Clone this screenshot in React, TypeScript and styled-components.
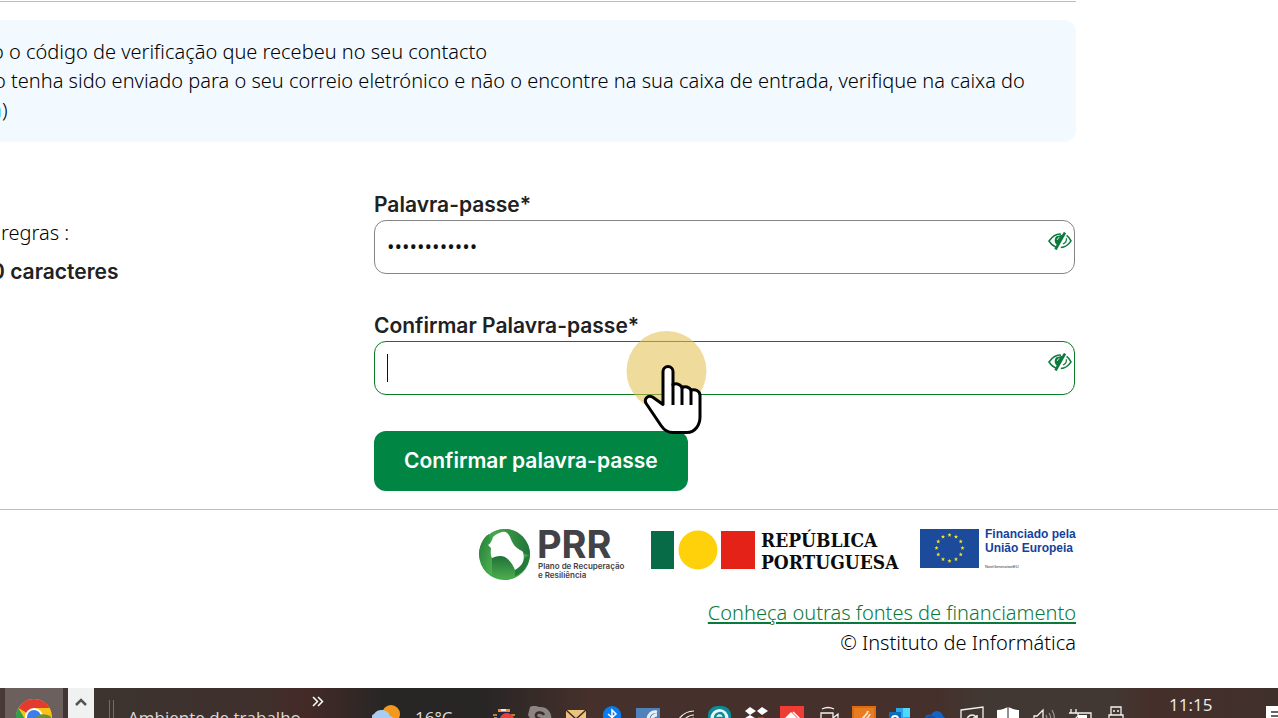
import React from 'react';
import styled, { createGlobalStyle } from 'styled-components';

const GlobalStyle = createGlobalStyle`
  *, *::before, *::after { box-sizing: border-box; }
  body { margin: 0; background: #fff; color: #000; font: 300 20px/29px "Noto Sans", "Open Sans", sans-serif; }
  p, h2 { margin: 0; }
`;

const Page = styled.div`
  height: 100vh;
  overflow: hidden;
`;
const Main = styled.main`
  padding-right: 202px;
  border-top: 1px solid #fff;
`;
const TopRule = styled.hr`
  height: 1px;
  margin: 0 0 18px;
  border: 0;
  background: #bdbdbd;
`;
const Notice = styled.section`
  padding: 17px 20px 18px 0;
  background: #f2f9ff;
  border-radius: 0 12px 12px 0;
  white-space: nowrap;
`;
const NoticeLine = styled.p<{ $shift: number }>`
  margin-left: -${p => p.$shift}px;
  a { color: #2a9fe0; text-decoration: none; }
`;
const Columns = styled.div`
  display: grid;
  grid-template-columns: 374px 1fr;
  padding: 47px 1px 18px 0;
`;
const Rules = styled.div`
  padding-top: 29px;
  p { padding-left: 1px; }
`;
const RuleHeading = styled.h2`
  margin: 10px 0 0 -9px;
  font: 600 21px/29px Inter, sans-serif;
  color: #212121;
`;
const Form = styled.form`
  display: flex;
  flex-direction: column;
  align-items: flex-start;
  gap: 36px;
`;
const Field = styled.div`
  width: 100%;
`;
const Label = styled.label`
  display: block;
  font: 600 21px/31px Inter, sans-serif;
  color: #212121;
`;
const InputWrap = styled.div<{ $active?: boolean }>`
  position: relative;
  display: flex;
  height: 54px;
  border: 1px solid ${p => (p.$active ? '#0b7a2b' : '#858585')};
  border-radius: 12px;
`;
const Input = styled.input`
  flex: 1;
  min-width: 0;
  padding: 0 12px 2px;
  border: 0;
  outline: 0;
  background: transparent;
  color: #111;
  font: 400 20px/29px "Open Sans", sans-serif;
`;
const Caret = styled.span`
  position: absolute;
  left: 12px;
  top: 12px;
  width: 1px;
  height: 28px;
  background: #111;
`;
const EyeButton = styled.button`
  align-self: flex-start;
  padding: 11px 2px 0 0;
  border: 0;
  background: none;
  svg { display: block; }
`;
const Pointer = styled.svg`
  position: absolute;
  left: 250px;
  top: -13px;
  z-index: 2;
`;
const Submit = styled.button`
  height: 60px;
  padding: 0 30px 2px;
  border: 0;
  border-radius: 12px;
  background: #008542;
  color: #fff;
  font: 600 21px/29px Inter, sans-serif;
  white-space: nowrap;
`;
const Footer = styled.footer`
  padding: 19px 202px 30px 0;
  border-top: 1px solid #bdbdbd;
  text-align: right;
  line-height: 30px;
`;
const Logos = styled.div`
  display: flex;
  justify-content: flex-end;
  gap: 20px;
  padding-bottom: 17px;
  svg { display: block; overflow: visible; }
`;
const FundingLink = styled.a`
  color: #0a7a3c;
  text-decoration: underline;
  text-underline-offset: 2px;
`;
const Taskbar = styled.div`
  display: flex;
  align-items: center;
  height: 60px;
  padding-left: 5px;
  background: linear-gradient(90deg, #4a3936 0, #3c342f 8%, #3f302c 20%, #432a27 24%, #282625 30%, #282625 38%, #45302b 46%, #45302b 73%, #423833 77%, #423833 87%, #462f2a 90%, #40302c 100%);
  color: #eee;
  white-space: nowrap;
  svg { display: block; flex: none; }
`;
const AppButton = styled.button`
  display: grid;
  place-items: center;
  width: 58px;
  height: 60px;
  padding: 0 0 2px;
  border: 0;
  background: #6b605d;
`;
const ScrollButton = styled.button`
  width: 26px;
  height: 60px;
  margin: 0 15px 0 5px;
  padding: 9px 0 0 7px;
  border: 0;
  background: #f0f1f1;
  display: flex;
  align-items: flex-start;
`;
const Grip = styled.span`
  width: 5px;
  height: 36px;
  margin-right: 14px;
  border: solid #756c68;
  border-width: 0 1px;
`;
const TaskText = styled.span`
  font: 400 17px/24px "Open Sans", sans-serif;
  color: #dcdad9;
`;
const Overflow = styled.button`
  align-self: flex-start;
  margin-left: 11px;
  padding: 8px 0 0;
  border: 0;
  background: none;
`;
const Spacer = styled.div`
  flex: 1;
`;
const Weather = styled.div`
  display: flex;
  align-items: center;
  gap: 15px;
  width: 120px;
`;
const Tray = styled.div`
  display: flex;
  gap: 12px;
`;
const Clock = styled.time`
  align-self: flex-start;
  width: 96px;
  padding: 3px 0 0 41px;
  font: 400 17px/27px "Open Sans", sans-serif;
  color: #eee;
  box-sizing: content-box;
`;
const Edge = styled.div`
  width: 13px;
  overflow: hidden;
`;

const Eye = () => (
  <svg width="24" height="18" viewBox="0 0 24 18" fill="none" stroke="#0b7a3c" strokeWidth="1.5">
    <path d="M13 2.2C7.500 1.500 4 5 1 9c2 3 4.500 5.300 7.600 6.200" />
    <path d="M18.600 3.300C20.500 4.700 22 6.700 23 8.900c-2.600 4-5.800 6.500-10.200 6.700" />
    <path d="M8 4.500c-2 3-1.700 6.500 1.200 8.500L15 2.500z" fill="#0b7a3c" stroke="none" />
    <path d="M17 .5 7.500 17.500" strokeWidth="2.600" />
    <path d="M18.400 6.300c.3 2.700-1 4.800-3.400 5.700" strokeWidth="1.200" />
    <path d="M9.300 7.800c.2-1.300 1-2 2-2.300" stroke="#fff" strokeWidth="1" />
  </svg>
);

const Hand = () => (
  <Pointer width="86" height="110" viewBox="0 0 86 110" aria-hidden="true">
    <circle cx="41.500" cy="42" r="40" fill="#e2bf4a" fillOpacity=".55" />
    <path
      d="M38 75.500V42.500a5 5 0 0 1 10 0V56c2-2 7-1.500 9 2.600 3-1.800 7.500-.8 9 2.600 4-1.600 9 .6 9 5.300V88c0 8-5 15.500-13 15.500H48c-6 0-9-2.500-12-7L21.500 75c-3.300-5 1.400-9.500 6-7z"
      fill="#fff" stroke="#000" strokeWidth="3" strokeLinejoin="round"
    />
    <path d="M48 56v18.500M57 58v16.500M66 61v13.500" stroke="#000" strokeWidth="3" strokeLinecap="square" />
  </Pointer>
);

const PrrLogo = () => (
  <svg width="152" height="52" viewBox="0 0 152 52" role="img" aria-label="PRR">
    <defs>
      <linearGradient id="g1" x1="0" y1="0" x2="1" y2="1"><stop offset="0" stopColor="#237c3b" /><stop offset="1" stopColor="#50b250" /></linearGradient>
      <linearGradient id="g2" x1="0" y1="0" x2="1" y2="0"><stop offset="0" stopColor="#4aad4d" /><stop offset="1" stopColor="#217439" /></linearGradient>
      <linearGradient id="g3" x1="0" y1="0" x2="0" y2="1"><stop offset="0" stopColor="#1f7038" /><stop offset="1" stopColor="#4cae4d" /></linearGradient>
    </defs>
    <circle cx="25.500" cy="25.500" r="25.500" fill="#3da548" />
    <path d="M12 4C21-1 31-1 38 3c9 6 13 14 13 23-8-1-14-5-17-12C31 7 26 5 20 8z" fill="url(#g2)" />
    <path d="M0 24C1 14 5 8 10 5l3 24v17C5 41 0 33 0 24z" fill="url(#g1)" />
    <path d="M13 29c9-4 19-3 23 3 4 6 5 10 1 16-9 5-19 2-24-3z" fill="url(#g3)" />
    <path d="M36 41c2-7 8-12 15-15-1 10-6 17-15 21z" fill="#237c3b" />
    <path d="M14 8c3-3 6-4 9-5 4-1 6 1 8 5 2 5 3 7 6 10 3 3 5 3 7 5 1 4 1 7 0 10-2 4-5 6-8 8-2-5-5-10-10-13-4-2-9-1-13 1-2-4-1-7-1-10l-3-3c2-1 4-4 5-8z" fill="#fff" />
    <g fill="#434247" fontFamily="Inter, sans-serif">
      <text x="58" y="29" fontSize="38" fontWeight="700">PRR</text>
      <text x="59" y="40" fontSize="8" fontWeight="600">Plano de Recuperação</text>
      <text x="59" y="49" fontSize="8" fontWeight="600">e Resiliência</text>
    </g>
  </svg>
);

const RepublicLogo = () => (
  <svg width="249" height="52" viewBox="0 0 249 52" role="img" aria-label="República Portuguesa">
    <rect y="2" width="23" height="38" fill="#076b48" />
    <circle cx="47" cy="21" r="19.500" fill="#ffd10a" />
    <rect x="70" y="2" width="34" height="38" fill="#e42217" />
    <g fill="#0c0c0c" fontFamily="'DejaVu Serif Condensed', 'Liberation Serif', serif" fontSize="19" fontWeight="700">
      <text x="110" y="18">REPÚBLICA</text>
      <text x="110" y="40">PORTUGUESA</text>
    </g>
  </svg>
);

const stars = Array.from({ length: 12 }, (_, i) => {
  const a = (i * Math.PI) / 6;
  const cx = 29.5 + 13 * Math.sin(a);
  const cy = 19 - 13 * Math.cos(a);
  return Array.from({ length: 10 }, (_, k) => {
    const r = k % 2 ? 0.9 : 2.2;
    const t = (k * Math.PI) / 5;
    return `${cx + r * Math.sin(t)},${cy - r * Math.cos(t)}`;
  }).join(' ');
});

const EuLogo = () => (
  <svg width="156" height="52" viewBox="0 0 156 52" role="img" aria-label="Financiado pela União Europeia">
    <rect width="59" height="39" fill="#1d4b9b" />
    {stars.map(s => <polygon key={s} points={s} fill="#f6e629" />)}
    <g fontFamily="'Liberation Sans', Arial, sans-serif">
      <text x="65" y="9" fontSize="12" fontWeight="700" fill="#14419b">Financiado pela</text>
      <text x="65" y="23" fontSize="12" fontWeight="700" fill="#14419b">União Europeia</text>
      <text x="65" y="39" fontSize="4" fill="#333">NextGenerationEU</text>
    </g>
  </svg>
);

const Chrome = () => (
  <svg width="36" height="36" viewBox="0 0 36 36">
    <circle cx="18" cy="18" r="18" fill="#fbc116" />
    <path d="M18 18 2.400 9A18 18 0 0 1 33.600 9z" fill="#e33b2e" />
    <path d="M18 18H33.600V9H18z" fill="#fbc116" />
    <path d="M2.400 9A18 18 0 0 0 18 36l8-13.500L18 18l-8 4z" fill="#2da04e" />
    <circle cx="18" cy="18" r="9" fill="#fff" />
    <circle cx="18" cy="18" r="7" fill="#3b7de9" />
    <path d="M20 18c3-4 12-3 15 0v4H20z" fill="#6d8f35" />
  </svg>
);

const WeatherIcon = () => (
  <svg width="28" height="26" viewBox="0 0 28 26">
    <circle cx="19" cy="9" r="9" fill="#f39a1e" />
    <path d="M0 22a8 8 0 0 1 2-13 9 9 0 0 1 16 2 7 7 0 0 1 3 12z" fill="#a9cdf2" />
  </svg>
);

const W = '#f2f2f2';
const trayIcons: { name: string; art: React.ReactNode }[] = [
  { name: 'Debug', art: <><path d="M6 3h12v3H6z" fill="#f08a4b" /><path d="M9 3h5v2H9z" fill="#f4e8e0" /><path d="M4 10 8 6h10l4 5v8H4z" fill="#1d2746" /><path d="M1 9h4M19 9h4M2 12h3" stroke="#e4a33a" strokeWidth="1.500" /><path d="M8 12c2-6 11-7 14 0v8H8z" fill="#e8403a" /></> },
  { name: 'Skype', art: <><path d="M2 1C6-1 9 0 11 1c8-1 14 6 12 14l-6 8H8L0 9z" fill="#8b8583" /><path d="M16 9c-2-4-9-3-8 1s8 2 8 6" stroke="#3c2e2b" strokeWidth="2.500" fill="none" /></> },
  { name: 'Mail', art: <><path d="M2 4h20v16H2z" fill="#edc27c" /><path d="m2 4 10 9L22 4" stroke="#3c2d28" strokeWidth="1.500" fill="none" /></> },
  { name: 'Bluetooth', art: <><rect x="3" width="18" height="24" rx="9" fill="#0a7cf0" /><path d="m8 8 8 7-4 4V4l4 4-8 7" stroke="#fff" strokeWidth="1.500" fill="none" /></> },
  { name: 'Sync', art: <><path d="M0 2h24v22H0z" fill="#4f82bb" /><path d="M12 14c0-6 4-9 9-8M16 14c0-4 2-5 5-5" stroke="#e8eef6" strokeWidth="3" fill="none" /></> },
  { name: 'Network', art: <path d="M5 16C9 9 15 5 22 5M10 17c3-5 7-8 12-8M15 17c2-3 4-5 7-5" stroke={W} strokeWidth="1.200" fill="none" /> },
  { name: 'ESET', art: <><rect y="0" width="23" height="24" rx="9" fill="#0d8b98" /><circle cx="11.500" cy="12" r="9" fill="#e9f6f6" /><path d="M7 12h9c0-7-9-6-9 0s7 5 9 3" stroke="#0d8b98" strokeWidth="2.500" fill="none" /></> },
  { name: 'Dropbox', art: <><path d="m1 5 5-4 6 4-6 4zM13 5l5-4 6 4-6 4zM1 12l5-3 5 3-5 3z" fill="#fff" /><path d="M14 11h6v6h-6z" fill="#cf2c2c" /></> },
  { name: 'AnyDesk', art: <><path d="M0 0h24v24H0z" fill="#ef3d33" /><path d="m4 13 7-7 7 7-7 7z" fill="#fff" /><path d="m13 6 7 7-7 7" stroke="#fff" strokeWidth="1.500" fill="none" /></> },
  { name: 'Camera', art: <path d="M6 3c4-2 8-2 12 0M5 7h12v11H5zM17 12l5-4v10l-5-3" stroke={W} strokeWidth="1.300" fill="none" /> },
  { name: 'Java', art: <><path d="M0 0h24v24H0z" fill="#dd6b12" /><path d="M2 2h20v20H2z" fill="#e87c20" /><path d="M10 17c-2-6 5-6 6-12M13 17c-1-4 3-4 5-9" stroke="#fbe5cf" strokeWidth="1.800" fill="none" /></> },
  { name: 'Outlook', art: <><path d="M8 2h14v20H8z" fill="#28a8ea" /><path d="M15 2h7v9h-7z" fill="#50d9ff" /><path d="M1 6h12v14H1z" fill="#0f6cbd" /><circle cx="7" cy="13" r="3" stroke="#fff" strokeWidth="2" fill="none" /></> },
  { name: 'OneDrive', art: <><path d="M1 13c0-5 5-5 6-4 3-6 10-5 12 1l3 3v7H1z" fill="#1464c8" /><path d="M1 13c3-5 8-4 11-1v8H1z" fill="#0f4fa8" /></> },
  { name: 'Update', art: <><path d="M1 4 23 1v22H1z" stroke={W} strokeWidth="1.300" fill="none" /><path d="M16 11a5 5 0 1 0 1 4m0-6v3h-4" stroke={W} strokeWidth="1.500" fill="none" /></> },
  { name: 'Security', art: <><path d="M1 4c5 0 8-2 11-3 3 1 6 3 11 3v8H1z" fill="#fff" /><path d="M12 1v20" stroke="#222" /><path d="M14 12h8v6h-8z" fill="#1e9a48" /></> },
  { name: 'Volume', art: <><path d="M2 10h3l6-6v17l-6-6H2z" stroke={W} strokeWidth="1.300" fill="none" /><path d="M14 9c1 2 1 4 0 6M17 7c2 3 2 7 0 10M20 4c3 5 3 11 0 16" stroke="#99908d" strokeWidth="1.300" fill="none" /></> },
  { name: 'Battery', art: <><path d="M3 3v4M8 3v4M1 7h9v3l-3 3v5M9 7h14v10H9" stroke={W} strokeWidth="1.300" fill="none" /><path d="M10 9h9v6h-9z" fill="#fff" /></> },
  { name: 'USB', art: <path d="M7 1h10v8H7zM5 9h14v14H5zM9 5h2M13 5h2" stroke={W} strokeWidth="1.300" fill="none" /> },
];

export default function App() {
  return (
    <Page>
      <GlobalStyle />
      <Main>
        <TopRule />
        <Notice>
          <NoticeLine $shift={8}>o o código de verificação que recebeu no seu contacto</NoticeLine>
          <NoticeLine $shift={6}>o tenha sido enviado para o seu correio eletrónico e não o encontre na sua caixa de entrada, verifique na caixa do</NoticeLine>
          <NoticeLine $shift={16}><a href="#spam">m</a>)</NoticeLine>
        </Notice>
        <Columns>
          <Rules>
            <p>regras :</p>
            <RuleHeading>0 caracteres</RuleHeading>
          </Rules>
          <Form onSubmit={e => e.preventDefault()}>
            <Field>
              <Label htmlFor="password">Palavra-passe*</Label>
              <InputWrap>
                <Input id="password" type="password" defaultValue="palavra12345" />
                <EyeButton type="button" aria-label="Mostrar palavra-passe"><Eye /></EyeButton>
              </InputWrap>
            </Field>
            <Field>
              <Label htmlFor="confirm">Confirmar Palavra-passe*</Label>
              <InputWrap $active>
                <Input id="confirm" type="password" />
                <Caret />
                <EyeButton type="button" aria-label="Mostrar confirmação"><Eye /></EyeButton>
                <Hand />
              </InputWrap>
            </Field>
            <Submit type="submit">Confirmar palavra-passe</Submit>
          </Form>
        </Columns>
      </Main>
      <Footer>
        <Logos>
          <PrrLogo />
          <RepublicLogo />
          <EuLogo />
        </Logos>
        <p><FundingLink href="#financiamento">Conheça outras fontes de financiamento</FundingLink></p>
        <p>© Instituto de Informática</p>
      </Footer>
      <Taskbar>
        <AppButton aria-label="Chrome"><Chrome /></AppButton>
        <ScrollButton aria-label="Subir">
          <svg width="12" height="10" viewBox="0 0 12 10"><path d="m1 8 5-5 5 5" stroke="#555" strokeWidth="2.500" fill="none" /></svg>
        </ScrollButton>
        <Grip />
        <TaskText>Ambiente de trabalho</TaskText>
        <Overflow aria-label="Mais">
          <svg width="12" height="11" viewBox="0 0 12 11"><path d="m1 1 4.500 4.500L1 10M6 1l4.500 4.500L6 10" stroke="#fff" strokeWidth="1.500" fill="none" /></svg>
        </Overflow>
        <Spacer />
        <Weather>
          <WeatherIcon />
          <TaskText>16°C</TaskText>
        </Weather>
        <Tray>
          {trayIcons.map(({ name, art }) => (
            <svg key={name} width="24" height="24" viewBox="0 0 24 24" role="img" aria-label={name}>{art}</svg>
          ))}
        </Tray>
        <Clock>11:15</Clock>
        <Edge>
          <svg width="24" height="24" viewBox="0 0 24 24"><path d="M1 0h23v24H1z" fill="#fff" /><path d="M6 6h16M6 10h16" stroke="#333" strokeWidth="1.500" /></svg>
        </Edge>
      </Taskbar>
    </Page>
  );
}
